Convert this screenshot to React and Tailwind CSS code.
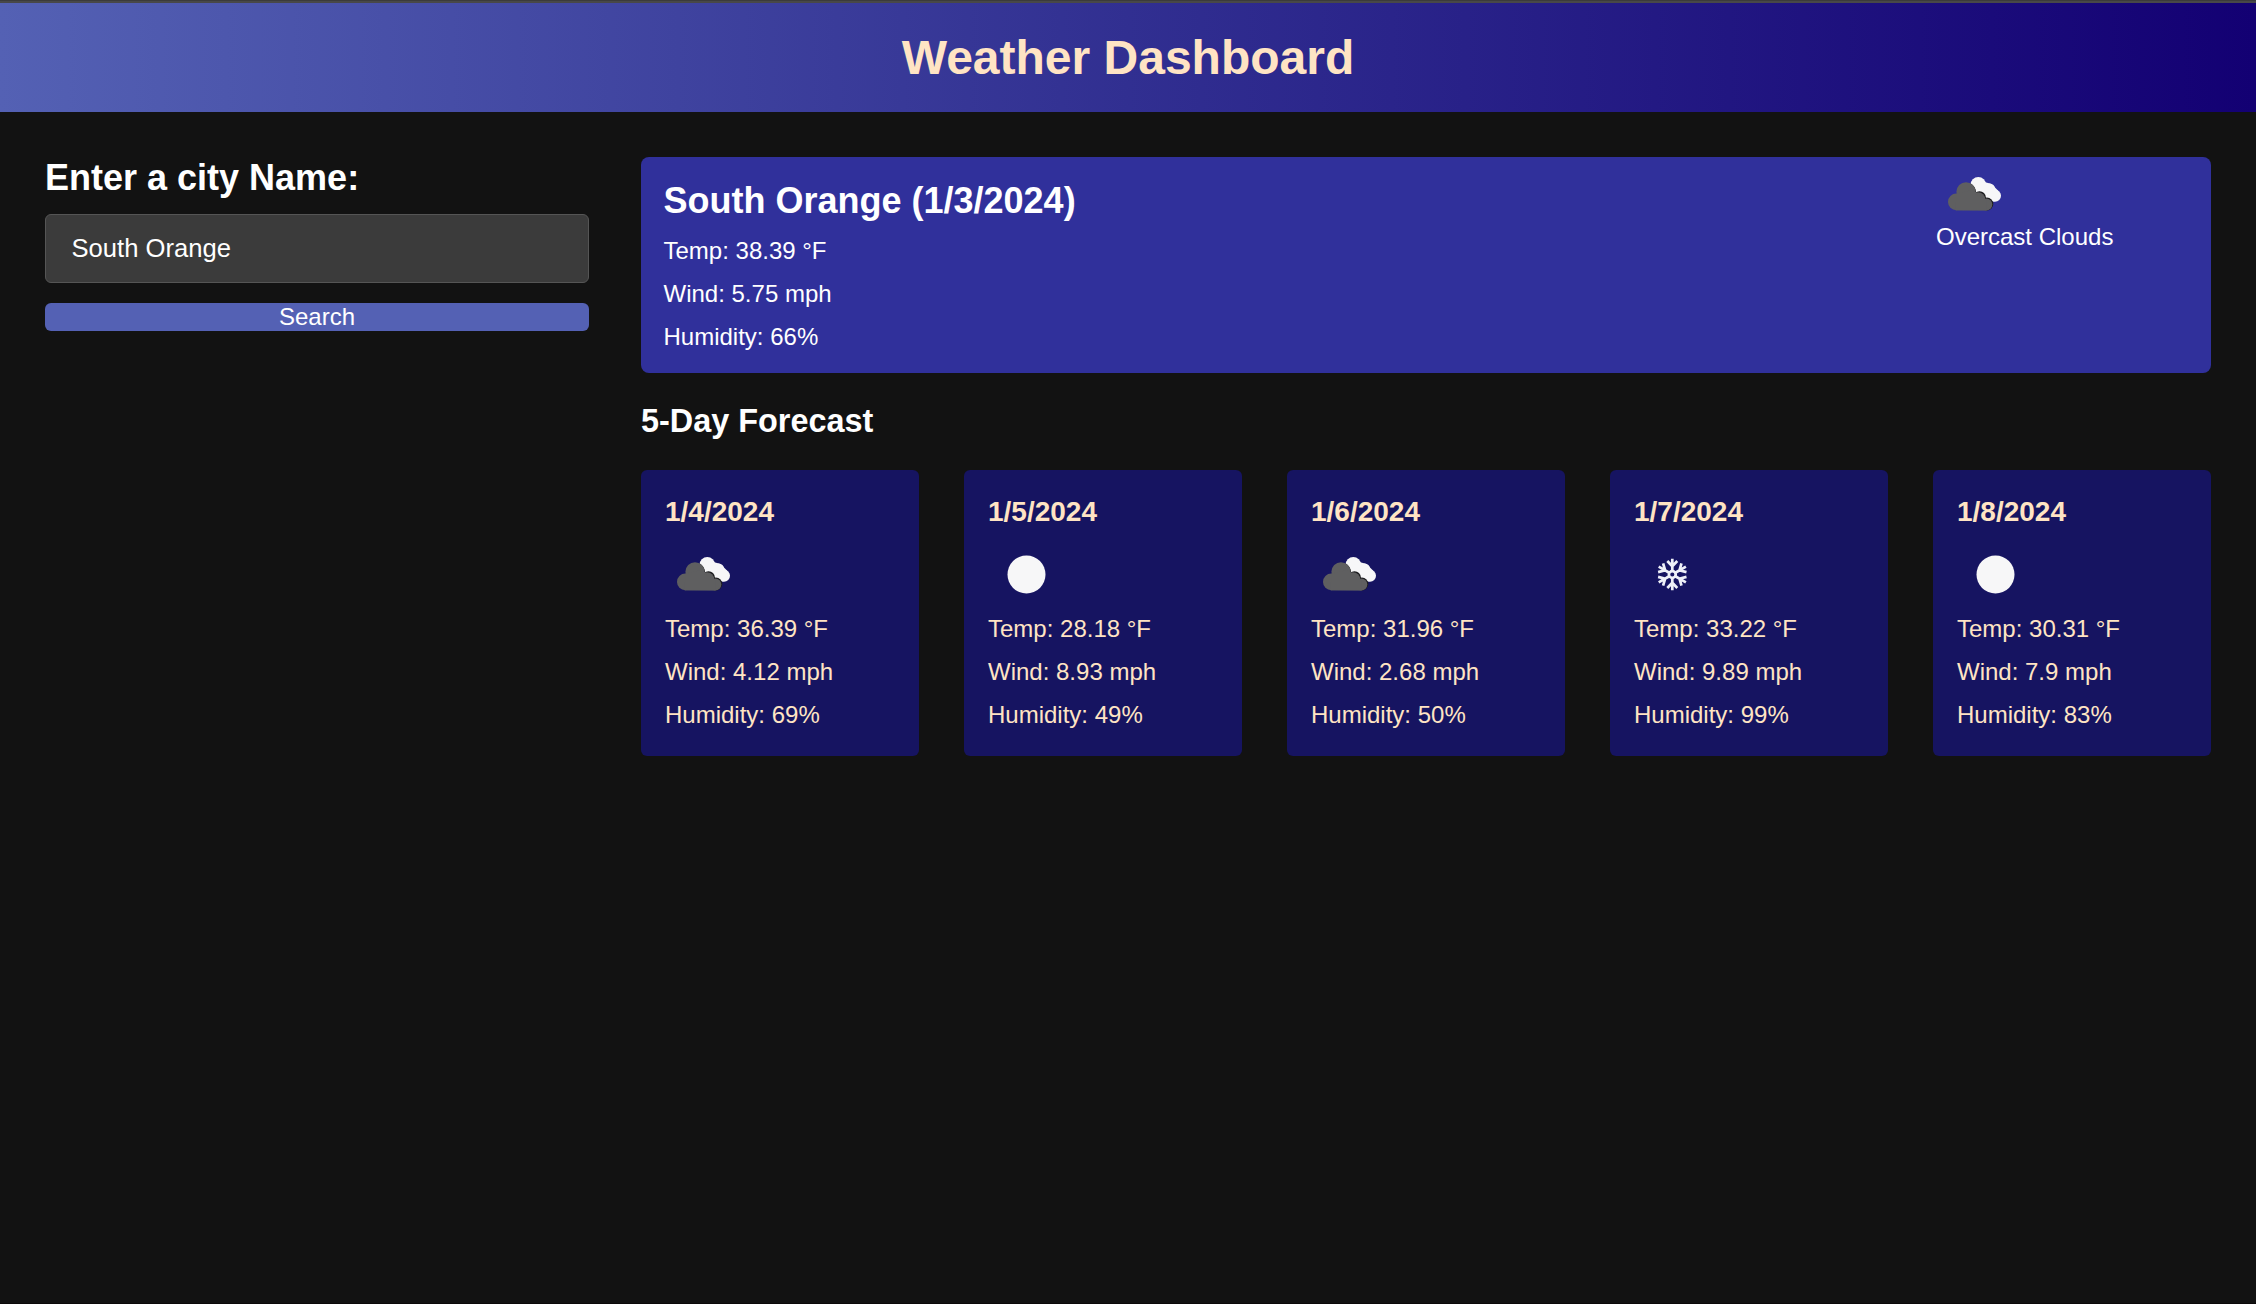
function CloudIcon() {
  return (
    <svg viewBox="0 0 75 75" className="block size-[75px]">
      <g transform="translate(6.5 18)">
        <g fill="#f7f7f8">
          <circle cx="34.8" cy="9.8" r="7.7" />
          <circle cx="46" cy="14" r="5.6" />
          <circle cx="51.5" cy="20.7" r="6" />
          <path d="M29 14 L41 7 L48 9 L55 16 L51 26.6 L38 26 Z" />
        </g>
        {/* thin shadow cast on the rear cloud */}
        <g fill="#1c1c1e">
          <path d="M27 8.2 C30.4 10.4 32.2 13 32.6 17 L28 20 Z" />
          <circle cx="36" cy="22.6" r="6.4" />
          <circle cx="43.4" cy="29" r="6.4" />
        </g>
        <g fill="#5f5f60">
          <circle cx="12.8" cy="26.9" r="8.3" />
          <circle cx="22.5" cy="16.8" r="9.6" />
          <circle cx="34.6" cy="24.2" r="7" />
          <circle cx="42.8" cy="29.4" r="6" />
          <path d="M12.8 35.2 L12.8 18.7 L31 14.5 L32.2 19 L43 25 L43 35.4 Z" />
          <rect x="12" y="27" width="31" height="8.3" />
        </g>
      </g>
    </svg>
  );
}

function SunIcon() {
  return (
    <svg viewBox="0 0 75 75" className="block size-[75px]">
      <circle cx="37.5" cy="37.5" r="19" fill="#f7f7f8" />
    </svg>
  );
}

function SnowIcon() {
  return (
    <svg viewBox="0 0 75 75" className="block size-[75px]">
      <g fill="none" stroke="#eef0f8" strokeWidth="2.7">
        <circle cx="37.3" cy="37.5" r="3.4" />
        {[0, 60, 120, 180, 240, 300].map((angle) => (
          <path key={angle} transform={`rotate(${angle} 37.3 37.5)`} d="M37.3 34 V21.8 M32.3 24 L37.3 29.2 L42.3 24" />
        ))}
      </g>
    </svg>
  );
}

const ICONS = { cloud: CloudIcon, sun: SunIcon, snow: SnowIcon };

const FORECAST = [
  { date: "1/4/2024", icon: "cloud", temp: "36.39", wind: "4.12", humidity: "69" },
  { date: "1/5/2024", icon: "sun", temp: "28.18", wind: "8.93", humidity: "49" },
  { date: "1/6/2024", icon: "cloud", temp: "31.96", wind: "2.68", humidity: "50" },
  { date: "1/7/2024", icon: "snow", temp: "33.22", wind: "9.89", humidity: "99" },
  { date: "1/8/2024", icon: "sun", temp: "30.31", wind: "7.9", humidity: "83" },
];

function Readings({ temp, wind, humidity }) {
  return (
    <div className="text-[24px] leading-[43px]">
      <p>Temp: {temp} °F</p>
      <p>Wind: {wind} mph</p>
      <p>Humidity: {humidity}%</p>
    </div>
  );
}

function ForecastCard({ date, icon, ...readings }) {
  const Icon = ICONS[icon];
  return (
    <article className="h-[286px] rounded-[6px] bg-[#161461] px-[24px] pt-[22px] text-[#ffe4c4]">
      <h3 className="text-[28px] leading-10 font-bold">{date}</h3>
      <div className="mt-[5px] mb-[-5px] ml-[0.5px]">
        <Icon />
      </div>
      <Readings {...readings} />
    </article>
  );
}

export default function App() {
  return (
    <div className="flex h-[1304px] w-[2256px] flex-col overflow-hidden border-b border-[#0b0909] bg-[#121212] font-['Liberation_Sans',Arial,sans-serif] text-white">
      <div className="h-[3px] shrink-0 border-t border-[#3b3b3b] bg-[#484848]" />
      <header className="flex h-[109px] shrink-0 items-center justify-center bg-linear-to-r/srgb from-[#5461b4] via-[#312f91] to-[#130073]">
        <h1 className="text-[48px] leading-none font-bold text-[#ffe4c4]">Weather Dashboard</h1>
      </header>

      <main className="flex px-[45px] pt-[45px]">
        <aside className="w-[544px] shrink-0">
          <h2 className="pt-px text-[36px] leading-10 font-bold">Enter a city Name:</h2>
          <form className="mt-[16px]" onSubmit={(event) => event.preventDefault()}>
            <input
              type="text"
              defaultValue="South Orange"
              className="block h-[69px] w-full rounded-[6px] border border-[#555555] bg-[#3b3b3b] px-[25.5px] text-[25.6px]"
            />
            <button className="mt-[20px] block h-[28px] w-full rounded-[6px] bg-[#5461b4] text-[24px] leading-[28px]">
              Search
            </button>
          </form>
        </aside>

        <div className="ml-[52px] flex-1">
          <section className="flex h-[216px] justify-between rounded-[8px] bg-[#30309b] pl-[22.5px]">
            <div className="pt-[24px]">
              <h2 className="mb-[8px] text-[36px] leading-10 font-bold">South Orange (1/3/2024)</h2>
              <Readings temp="38.39" wind="5.75" humidity="66" />
            </div>
            <div className="w-[275px]">
              <div className="ml-[0.5px]">
                <CloudIcon />
              </div>
              <p className="mt-[-17px] text-[24px] leading-[43px]">Overcast Clouds</p>
            </div>
          </section>

          <h2 className="mt-[28px] mb-[29px] text-[32.4px] leading-10 font-bold">5-Day Forecast</h2>
          <section className="grid grid-cols-5 gap-[45px]">
            {FORECAST.map((day) => (
              <ForecastCard key={day.date} {...day} />
            ))}
          </section>
        </div>
      </main>
    </div>
  );
}
